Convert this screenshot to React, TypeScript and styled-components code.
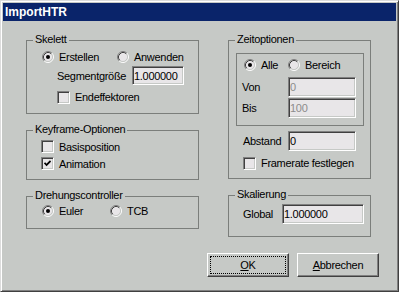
import React from 'react';
import styled, { createGlobalStyle } from 'styled-components';

const face = '#c6c9c6';
const field = '#e8e6e8';
const shadow = '#808080';
const dark = '#404040';
const groupLine = '#7b7e7b';

const GlobalStyle = createGlobalStyle`
  html, body {
    margin: 0;
    padding: 0;
    background: ${face};
  }
  body {
    font-family: "Liberation Sans", Arial, sans-serif;
    font-size: 11px;
    letter-spacing: -0.3px;
    color: #000;
  }
  * {
    box-sizing: border-box;
  }
`;

const Window = styled.div`
  width: 399px;
  height: 292px;
  background: ${face};
  border: 1px solid;
  border-color: #dcdcdc ${dark} ${dark} #dcdcdc;
  box-shadow: inset 1px 1px #fff, inset -1px -1px ${shadow};
  padding: 2px;
  display: flex;
  flex-direction: column;
`;

const TitleBar = styled.div`
  flex: none;
  height: 18px;
  background: #0a246a;
  color: #fff;
  font-weight: bold;
  font-size: 12px;
  letter-spacing: 0;
  display: flex;
  align-items: center;
  padding-left: 2px;
`;

const Body = styled.div`
  flex: 1;
  display: flex;
  flex-direction: column;
  padding: 19px 17px 0 23px;
`;

const Columns = styled.div`
  display: flex;
  align-items: flex-start;
  gap: 29px;
`;

const Column = styled.div<{ $w: number }>`
  width: ${({ $w }) => $w}px;
  display: flex;
  flex-direction: column;
  gap: 16px;
`;

const Group = styled.div<{ $pt: number; $pb: number }>`
  position: relative;
  border: 1px solid ${groupLine};
  padding: ${({ $pt }) => $pt}px 0 ${({ $pb }) => $pb}px;
  display: flex;
  flex-direction: column;
`;

const Caption = styled.span`
  position: absolute;
  top: -8px;
  left: 6px;
  padding: 0 2px;
  line-height: 13px;
  background: ${face};
`;

const Inset = styled.div`
  margin-left: 7px;
  width: 128px;
  border: 1px solid ${groupLine};
  padding: 3px 0 7px;
  display: flex;
  flex-direction: column;
`;

const Row = styled.div<{ $h: number; $indent: number; $mt?: number }>`
  display: flex;
  align-items: center;
  height: ${({ $h }) => $h}px;
  padding-left: ${({ $indent }) => $indent}px;
  margin-top: ${({ $mt }) => $mt ?? 0}px;
`;

const Label = styled.span<{ $w: number }>`
  width: ${({ $w }) => $w}px;
  flex: none;
  white-space: nowrap;
`;

const Field = styled.input<{ $w: number; $h: number }>`
  width: ${({ $w }) => $w}px;
  height: ${({ $h }) => $h}px;
  flex: none;
  margin: 0;
  padding: 0 0 0 1px;
  border: 1px solid;
  border-color: ${shadow} #fff #fff ${shadow};
  box-shadow: inset 1px 1px ${dark}, inset -1px -1px ${face};
  background: ${field};
  font: inherit;
  letter-spacing: inherit;
  color: #000;
  outline: none;

  &:disabled {
    color: #8c8c8c;
    background: ${field};
  }
`;

const Option = styled.label<{ $w?: number }>`
  display: inline-flex;
  align-items: center;
  gap: 5px;
  white-space: nowrap;
  ${({ $w }) => ($w ? `width: ${$w}px; flex: none;` : '')}
`;

const Box = styled.span`
  width: 13px;
  height: 13px;
  flex: none;
  display: inline-flex;
  align-items: center;
  justify-content: center;
  border: 1px solid;
  border-color: ${shadow} #fff #fff ${shadow};
  box-shadow: inset 1px 1px ${dark}, inset -1px -1px ${face};
  background: ${field};
`;

const ButtonRow = styled.div`
  display: flex;
  justify-content: flex-end;
  gap: 8px;
  margin-top: 16px;
`;

const Button = styled.button<{ $focused?: boolean }>`
  position: relative;
  width: 82px;
  height: 24px;
  margin: 0;
  padding: 0;
  background: ${face};
  border: 1px solid;
  border-color: #fff ${dark} ${dark} #fff;
  box-shadow: inset -1px -1px ${shadow};
  font: inherit;
  letter-spacing: inherit;
  color: #000;

  ${({ $focused }) =>
    $focused
      ? `&::after {
          content: '';
          position: absolute;
          inset: 2px;
          border: 1px dotted #000;
        }`
      : ''}
`;

const Key = styled.span`
  text-decoration: underline;
`;

const RadioMark: React.FC<{ on?: boolean }> = ({ on }) => (
  <svg width="12" height="12" viewBox="0 0 12 12" style={{ flex: 'none' }}>
    <circle cx="6" cy="6" r="4.5" fill={field} />
    <path d="M2.11 9.89 A5.5 5.5 0 0 1 9.89 2.11" fill="none" stroke={shadow} />
    <path d="M9.89 2.11 A5.5 5.5 0 0 1 2.11 9.89" fill="none" stroke="#fff" />
    <path d="M2.82 9.18 A4.5 4.5 0 0 1 9.18 2.82" fill="none" stroke={dark} />
    <path d="M9.18 2.82 A4.5 4.5 0 0 1 2.82 9.18" fill="none" stroke={face} />
    {on && <circle cx="6" cy="6" r="2" fill="#000" />}
  </svg>
);

const Radio: React.FC<{ label: string; on?: boolean; w?: number }> = ({ label, on, w }) => (
  <Option $w={w}>
    <RadioMark on={on} />
    {label}
  </Option>
);

const Check: React.FC<{ label: string; on?: boolean }> = ({ label, on }) => (
  <Option>
    <Box>
      {on && (
        <svg width="7" height="7" viewBox="0 0 7 7">
          <polyline points="0.5,2.8 2.6,5 6.6,1" fill="none" stroke="#000" strokeWidth="1.8" />
        </svg>
      )}
    </Box>
    {label}
  </Option>
);

export default function App() {
  return (
    <>
      <GlobalStyle />
      <Window>
        <TitleBar>ImportHTR</TitleBar>
        <Body>
          <Columns>
            <Column $w={173}>
              <Group $pt={7} $pb={7}>
                <Caption>Skelett</Caption>
                <Row $h={18} $indent={15}>
                  <Radio w={75} label="Erstellen" on />
                  <Radio label="Anwenden" />
                </Row>
                <Row $h={19} $indent={30}>
                  <Label $w={75}>Segmentgröße</Label>
                  <Field $w={52} $h={19} defaultValue="1.000000" />
                </Row>
                <Row $h={18} $indent={30} $mt={3}>
                  <Check label="Endeffektoren" />
                </Row>
              </Group>

              <Group $pt={7} $pb={7}>
                <Caption>Keyframe-Optionen</Caption>
                <Row $h={17} $indent={14}>
                  <Check label="Basisposition" />
                </Row>
                <Row $h={17} $indent={14}>
                  <Check label="Animation" on />
                </Row>
              </Group>

              <Group $pt={5} $pb={8}>
                <Caption>Drehungscontroller</Caption>
                <Row $h={18} $indent={15}>
                  <Radio w={68} label="Euler" on />
                  <Radio label="TCB" />
                </Row>
              </Group>
            </Column>

            <Column $w={143}>
              <Group $pt={12} $pb={7}>
                <Caption>Zeitoptionen</Caption>
                <Inset>
                  <Row $h={16} $indent={7}>
                    <Radio w={44} label="Alle" on />
                    <Radio label="Bereich" />
                  </Row>
                  <Row $h={20} $indent={5} $mt={4}>
                    <Label $w={46}>Von</Label>
                    <Field $w={68} $h={20} defaultValue="0" disabled />
                  </Row>
                  <Row $h={20} $indent={5} $mt={1}>
                    <Label $w={46}>Bis</Label>
                    <Field $w={68} $h={20} defaultValue="100" disabled />
                  </Row>
                </Inset>
                <Row $h={20} $indent={14} $mt={5}>
                  <Label $w={45}>Abstand</Label>
                  <Field $w={68} $h={20} defaultValue="0" />
                </Row>
                <Row $h={16} $indent={14} $mt={4}>
                  <Check label="Framerate festlegen" />
                </Row>
              </Group>

              <Group $pt={8} $pb={12}>
                <Caption>Skalierung</Caption>
                <Row $h={20} $indent={14}>
                  <Label $w={39}>Global</Label>
                  <Field $w={82} $h={20} defaultValue="1.000000" />
                </Row>
              </Group>
            </Column>
          </Columns>

          <ButtonRow>
            <Button $focused>
              <Key>O</Key>K
            </Button>
            <Button>
              <Key>A</Key>bbrechen
            </Button>
          </ButtonRow>
        </Body>
      </Window>
    </>
  );
}
